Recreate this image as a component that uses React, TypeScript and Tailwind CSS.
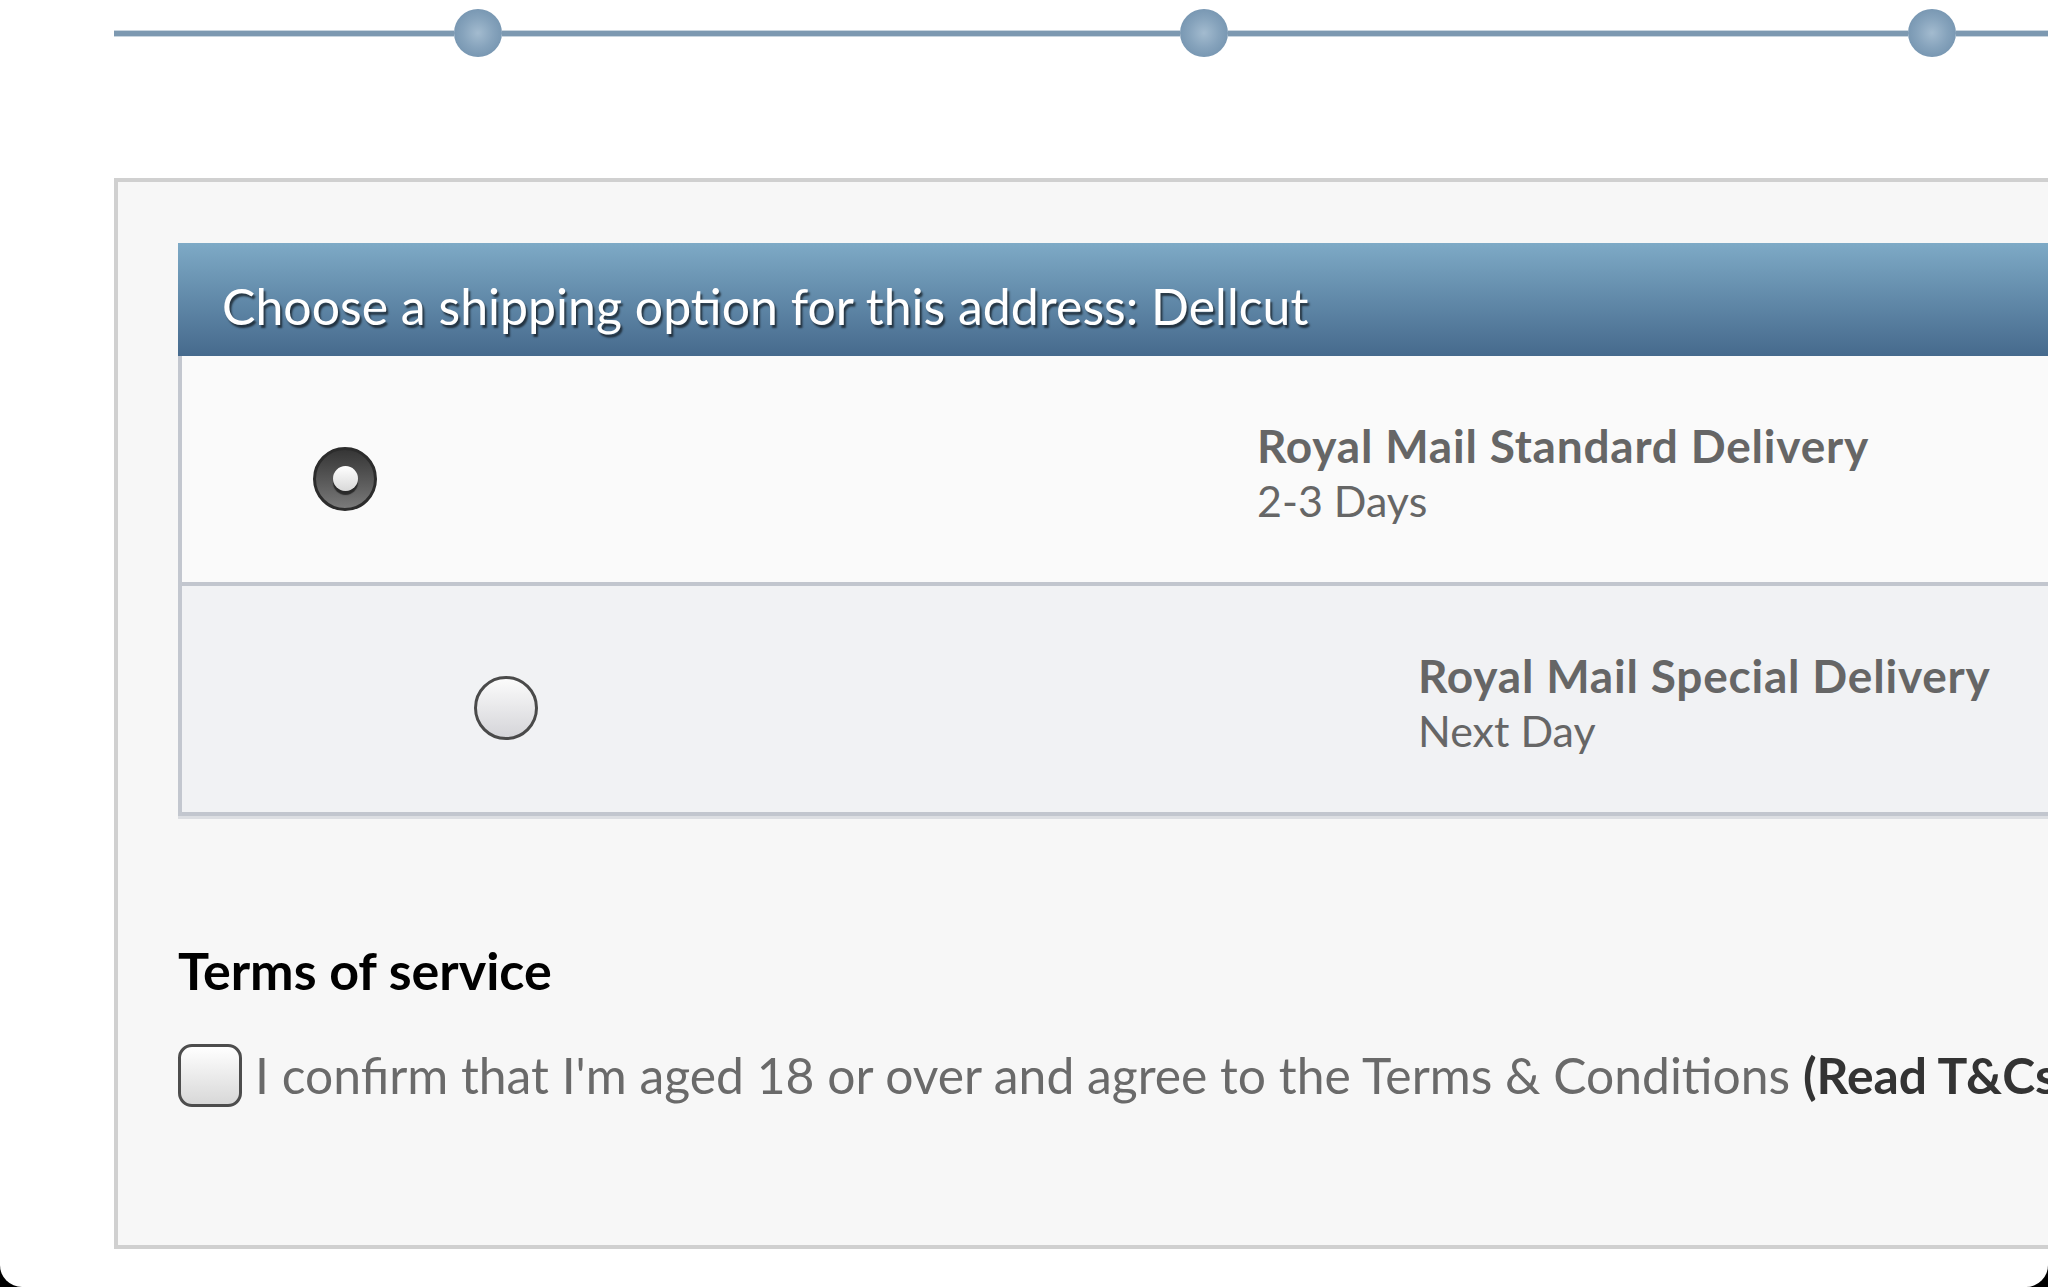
import React, { useState } from "react";

type ShippingOption = {
  id: string;
  name: string;
  eta: string;
  radioOffset: string; // left gap before the radio
};

const OPTIONS: ShippingOption[] = [
  { id: "standard", name: "Royal Mail Standard Delivery", eta: "2-3 Days", radioOffset: "ml-[131px]" },
  { id: "special", name: "Royal Mail Special Delivery", eta: "Next Day", radioOffset: "ml-[292px]" },
];

const Dot = () => (
  <div className="h-[48px] w-[48px] shrink-0 rounded-full bg-[radial-gradient(circle_at_50%_50%,#a3bbcf_0%,#86a3bc_45%,#6a8ba8_100%)]" />
);

const Line = ({ w }: { w: string }) => (
  <div className={`${w} h-[5px] shrink-0 bg-[#7d99b1] shadow-[0_1px_0_#c9d5df,0_-1px_0_#c9d5df]`} />
);

function Progress() {
  return (
    <div className="flex h-[48px] items-center pl-[114px] mt-[9px]">
      <Line w="w-[340px]" />
      <Dot />
      <Line w="w-[678px]" />
      <Dot />
      <Line w="w-[680px]" />
      <Dot />
      <Line w="w-[200px]" />
    </div>
  );
}

function Radio({ checked, onClick }: { checked: boolean; onClick: () => void }) {
  if (checked) {
    return (
      <button
        onClick={onClick}
        className="flex h-[64px] w-[64px] shrink-0 items-center justify-center rounded-full border-[3px] border-[#2c2c2c] bg-linear-to-b from-[#363636] to-[#7a7a7a]"
      >
        <span className="-translate-y-[1px] h-[25px] w-[25px] rounded-full bg-linear-to-b from-white to-[#d9d9d9] shadow-[0_4px_1px_#2a2a2a]" />
      </button>
    );
  }
  return (
    <button
      onClick={onClick}
      className="h-[64px] w-[64px] shrink-0 rounded-full border-[3px] border-[#4a4a4a] bg-linear-to-b from-[#fbfbfb] to-[#d5d5d9]"
    />
  );
}

export default function App() {
  const [selected, setSelected] = useState("standard");
  const [agreed, setAgreed] = useState(false);

  return (
    <div className="h-[1287px] w-full overflow-hidden bg-black font-['Lato','Open_Sans',sans-serif]">
      <div className="h-full overflow-hidden rounded-b-[22px] bg-white">
        <Progress />

        <div className="mt-[121px] ml-[114px] h-[1071px] w-[1980px] border-t-4 border-b-4 border-l-4 border-[#d0d0d0] bg-[#f7f7f7] pt-[61px] pl-[60px]">
          {/* shipping options */}
          <div className="flex h-[113px] items-center bg-linear-to-b from-[#7eaac6] to-[#466a8d] pl-[44px] pt-[12px]">
            <h2 className="text-[50px] leading-none text-white [text-shadow:2px_3px_2px_rgba(0,0,0,0.6)]">
              Choose a shipping option for this address: Dellcut
            </h2>
          </div>
          <div className="border-l-4 border-[#c3c7cf] shadow-[0_3px_0_#dcdee2]">
            {OPTIONS.map((o, i) => (
              <div
                key={o.id}
                className={`flex h-[230px] items-center border-b-4 border-[#c2c6ce] ${
                  i === 0 ? "bg-[#fafafa]" : "bg-[#f1f2f4]"
                }`}
              >
                <div className={`${o.radioOffset} mt-[20px]`}>
                  <Radio checked={selected === o.id} onClick={() => setSelected(o.id)} />
                </div>
                <div className="ml-[880px] mt-[8px] text-[#666]">
                  <div className="text-[46px] font-bold leading-[55px] tracking-[0.8px]">{o.name}</div>
                  <div className="text-[43px] leading-[55px]">{o.eta}</div>
                </div>
              </div>
            ))}
          </div>

          {/* terms */}
          <h3 className="mt-[128px] text-[52px] font-bold leading-none text-black">Terms of service</h3>
          <label className="mt-[42px] flex items-center whitespace-nowrap">
            <button
              onClick={() => setAgreed(!agreed)}
              className="h-[63px] w-[64px] shrink-0 rounded-[14px] border-[3px] border-[#4d4d4d] bg-linear-to-b from-white to-[#d8d8d8]"
            >
              {agreed && <span className="text-[40px] leading-none text-[#333]">✓</span>}
            </button>
            <span className="ml-[13px] text-[49.8px] text-[#6a6a6a]">
              I confirm that I'm aged 18 or over and agree to the Terms &amp; Conditions{" "}
              <a className="font-bold text-[#333]">(Read T&amp;Cs)</a>
            </span>
          </label>
        </div>
      </div>
    </div>
  );
}
